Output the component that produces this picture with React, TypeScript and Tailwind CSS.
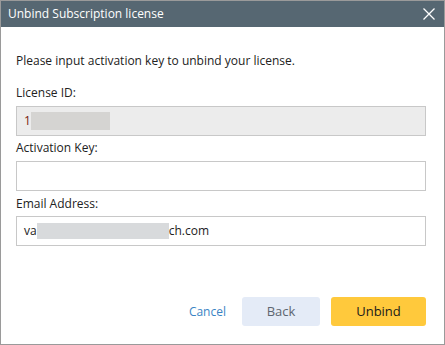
import React from "react";

export default function App() {
  return (
    <div
      className="w-[445px] h-[345px] bg-white border border-[#9a9a9a] flex flex-col"
      style={{ fontFamily: '"Open Sans", "Noto Sans", sans-serif' }}
    >
      <div className="h-[26px] bg-[#566772] flex items-center justify-between pl-[7px] pr-[6px] shrink-0">
        <span className="text-white text-[12px] leading-none">Unbind Subscription license</span>
        <svg width="14" height="14" viewBox="0 0 14 14" className="mr-[2px]">
          <path d="M1.5 1.5 L12.5 12.5 M12.5 1.5 L1.5 12.5" stroke="#ffffff" strokeWidth="1.3" />
        </svg>
      </div>
      <div className="flex flex-col px-[15px] text-[12px] text-[#222]">
        <p className="mt-[25px] leading-[17px]">Please input activation key to unbind your license.</p>
        <p className="mt-[15px] leading-[17px]">License ID:</p>
        <div className="mt-[5px] h-[30px] w-[410px] bg-[#ececec] border border-[#c8c8c8] flex items-center pl-[7px]">
          <span className="text-[#7a1a10]">1</span>
          <span className="w-[79px] h-[18px] bg-[#d5d4d2]" />
        </div>
        <p className="mt-[3px] leading-[17px]">Activation Key:</p>
        <div className="mt-[5px] h-[30px] w-[410px] bg-white border border-[#c8c8c8]" />
        <p className="mt-[4px] leading-[17px]">Email Address:</p>
        <div className="mt-[4px] h-[30px] w-[410px] bg-white border border-[#c8c8c8] flex items-center pl-[7px]">
          <span>va</span>
          <span className="w-[132px] h-[16px] bg-[#d8dadc]" />
          <span>ch.com</span>
        </div>
        <div className="mt-[51px] flex items-center justify-end pr-[3px]">
          <span className="text-[#3a84c4] text-[12px] mr-[16px]">Cancel</span>
          <div className="w-[78px] h-[29px] rounded-[3px] bg-[#e4ebf7] flex items-center justify-center text-[13px] text-[#5e6670]">Back</div>
          <div className="ml-[11px] w-[95px] h-[29px] rounded-[3px] bg-[#ffc93c] flex items-center justify-center text-[13px] text-[#1a1a1a]">Unbind</div>
        </div>
      </div>
    </div>
  );
}
